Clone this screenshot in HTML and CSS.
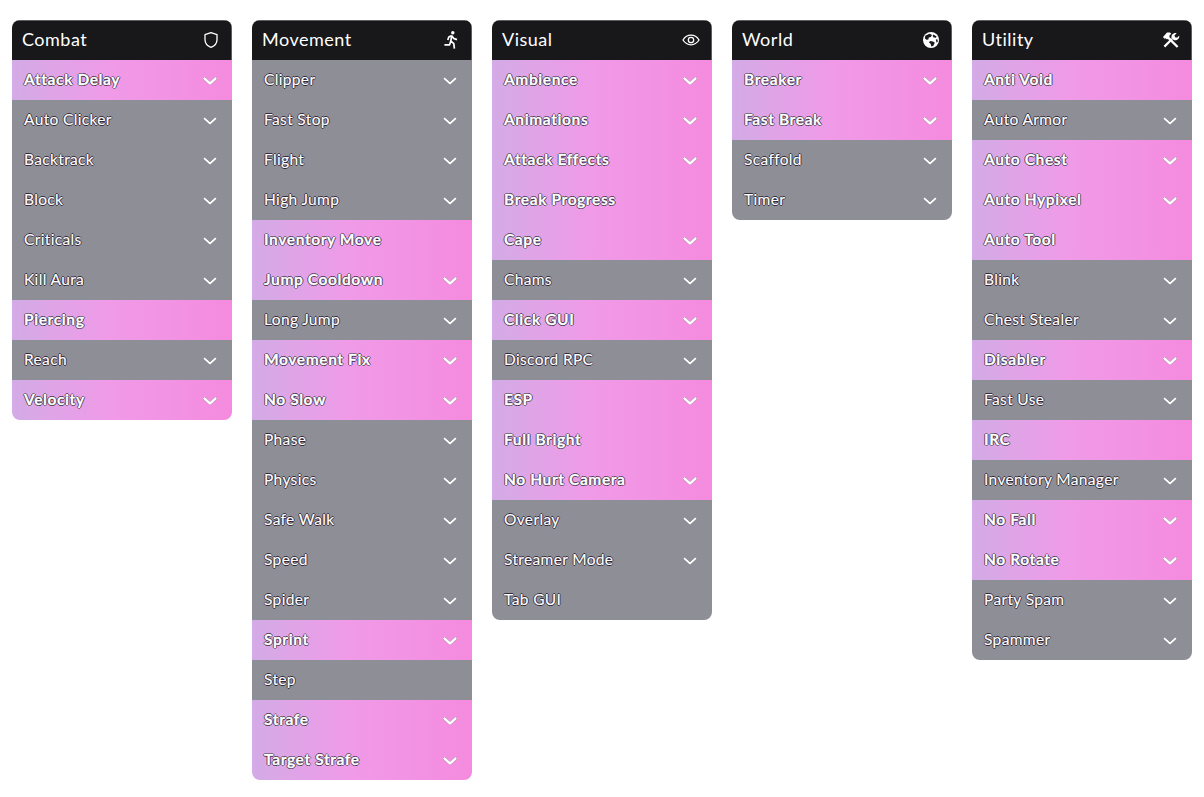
FILE: index.html
```html
<!DOCTYPE html>
<html lang="en">
<head>
<meta charset="utf-8">
<title>Click GUI</title>
<link rel="stylesheet" href="styles.css">
</head>
<body>
<svg class="defs" width="0" height="0" aria-hidden="true">
  <symbol id="chev" viewBox="0 0 14 8"><path d="M1.500 1.500 7 6.500l5.500-5" fill="none" stroke="currentColor" stroke-linecap="round" stroke-linejoin="round"/></symbol>
</svg>
<main class="board" id="board">
  <section class="panel">
    <header class="head"><span>Combat</span>
      <svg class="ico" viewBox="0 0 18 18"><path d="M9 1.600 15 3.600v5.200c0 3.600-2.400 6.200-6 7.600-3.600-1.400-6-4-6-7.600V3.600Z" fill="none" stroke="#fff" stroke-width="1.300" stroke-linejoin="round"/></svg>
    </header>
    <div class="row on"><span>Attack Delay</span><svg class="chev"><use href="#chev"/></svg></div>
    <div class="row"><span>Auto Clicker</span><svg class="chev"><use href="#chev"/></svg></div>
    <div class="row"><span>Backtrack</span><svg class="chev"><use href="#chev"/></svg></div>
    <div class="row"><span>Block</span><svg class="chev"><use href="#chev"/></svg></div>
    <div class="row"><span>Criticals</span><svg class="chev"><use href="#chev"/></svg></div>
    <div class="row"><span>Kill Aura</span><svg class="chev"><use href="#chev"/></svg></div>
    <div class="row on"><span>Piercing</span></div>
    <div class="row"><span>Reach</span><svg class="chev"><use href="#chev"/></svg></div>
    <div class="row on"><span>Velocity</span><svg class="chev"><use href="#chev"/></svg></div>
  </section>
  <section class="panel">
    <header class="head"><span>Movement</span>
      <svg class="ico" viewBox="0 0 18 18"><circle cx="10.800" cy="1.800" r="1.700" fill="#fff"/><path d="M9.800 4.600 6.800 6 5.800 9M9.800 4.600 8.800 10l3 2.600.6 5M9.800 4.600l1.800 2.800 3.400 1.200M8.800 10l-1.200 3.800H2.400" fill="none" stroke="#fff" stroke-width="1.700" stroke-linejoin="round"/></svg>
    </header>
    <div class="row"><span>Clipper</span><svg class="chev"><use href="#chev"/></svg></div>
    <div class="row"><span>Fast Stop</span><svg class="chev"><use href="#chev"/></svg></div>
    <div class="row"><span>Flight</span><svg class="chev"><use href="#chev"/></svg></div>
    <div class="row"><span>High Jump</span><svg class="chev"><use href="#chev"/></svg></div>
    <div class="row on"><span>Inventory Move</span></div>
    <div class="row on"><span>Jump Cooldown</span><svg class="chev"><use href="#chev"/></svg></div>
    <div class="row"><span>Long Jump</span><svg class="chev"><use href="#chev"/></svg></div>
    <div class="row on"><span>Movement Fix</span><svg class="chev"><use href="#chev"/></svg></div>
    <div class="row on"><span>No Slow</span><svg class="chev"><use href="#chev"/></svg></div>
    <div class="row"><span>Phase</span><svg class="chev"><use href="#chev"/></svg></div>
    <div class="row"><span>Physics</span><svg class="chev"><use href="#chev"/></svg></div>
    <div class="row"><span>Safe Walk</span><svg class="chev"><use href="#chev"/></svg></div>
    <div class="row"><span>Speed</span><svg class="chev"><use href="#chev"/></svg></div>
    <div class="row"><span>Spider</span><svg class="chev"><use href="#chev"/></svg></div>
    <div class="row on"><span>Sprint</span><svg class="chev"><use href="#chev"/></svg></div>
    <div class="row"><span>Step</span></div>
    <div class="row on"><span>Strafe</span><svg class="chev"><use href="#chev"/></svg></div>
    <div class="row on"><span>Target Strafe</span><svg class="chev"><use href="#chev"/></svg></div>
  </section>
  <section class="panel">
    <header class="head"><span>Visual</span>
      <svg class="ico" viewBox="0 0 18 18"><path d="M1 9c2-3.200 4.800-4.800 8-4.800s6 1.600 8 4.800c-2 3.200-4.800 4.800-8 4.800S3 12.200 1 9Z" fill="none" stroke="#fff" stroke-width="1.300"/><circle cx="9" cy="9" r="2.700" fill="none" stroke="#fff" stroke-width="1.300"/></svg>
    </header>
    <div class="row on"><span>Ambience</span><svg class="chev"><use href="#chev"/></svg></div>
    <div class="row on"><span>Animations</span><svg class="chev"><use href="#chev"/></svg></div>
    <div class="row on"><span>Attack Effects</span><svg class="chev"><use href="#chev"/></svg></div>
    <div class="row on"><span>Break Progress</span></div>
    <div class="row on"><span>Cape</span><svg class="chev"><use href="#chev"/></svg></div>
    <div class="row"><span>Chams</span><svg class="chev"><use href="#chev"/></svg></div>
    <div class="row on"><span>Click GUI</span><svg class="chev"><use href="#chev"/></svg></div>
    <div class="row"><span>Discord RPC</span><svg class="chev"><use href="#chev"/></svg></div>
    <div class="row on"><span>ESP</span><svg class="chev"><use href="#chev"/></svg></div>
    <div class="row on"><span>Full Bright</span></div>
    <div class="row on"><span>No Hurt Camera</span><svg class="chev"><use href="#chev"/></svg></div>
    <div class="row"><span>Overlay</span><svg class="chev"><use href="#chev"/></svg></div>
    <div class="row"><span>Streamer Mode</span><svg class="chev"><use href="#chev"/></svg></div>
    <div class="row"><span>Tab GUI</span></div>
  </section>
  <section class="panel">
    <header class="head"><span>World</span>
      <svg class="ico" viewBox="0 0 18 18"><circle cx="9" cy="9" r="8" fill="#fff"/><path d="M3.200 4.800 7.600 2.800 10 4 8.800 6 6.800 6.400 6.400 8.400 4.400 8.800 3 7.400ZM11.400 3.400l3.200 2-.6 1.400-2.200-.4-1.200-1.400ZM8 10l3 .4 1.800 1.400-1.400 3-2 .6-.8-2.600L7 11.600ZM13.800 8.400l1.600-.2.400 2.400-1.200 1.200Z" fill="#18181b"/></svg>
    </header>
    <div class="row on"><span>Breaker</span><svg class="chev"><use href="#chev"/></svg></div>
    <div class="row on"><span>Fast Break</span><svg class="chev"><use href="#chev"/></svg></div>
    <div class="row"><span>Scaffold</span><svg class="chev"><use href="#chev"/></svg></div>
    <div class="row"><span>Timer</span><svg class="chev"><use href="#chev"/></svg></div>
  </section>
  <section class="panel">
    <header class="head"><span>Utility</span>
      <svg class="ico" viewBox="0 0 18 18"><path d="M5 5.400 15.600 16" stroke="#fff" stroke-width="2.400" fill="none"/><path d="M1 6 5 1.600 8 1.400 9.400 3 7.600 4 7.400 6 5 8.400 3.600 7.200 2.400 7.800Z" fill="#fff"/><path d="M2.400 15.600 10 8" stroke="#fff" stroke-width="2.200" fill="none"/><path d="M9.600 7.200c-.8-2.800 1.600-5.600 5-5L12.400 4.600l1 1.800 2 .2 1.800-2.200c.6 3.200-2.400 5.600-5.400 4.600Z" fill="#fff"/></svg>
    </header>
    <div class="row on"><span>Anti Void</span></div>
    <div class="row"><span>Auto Armor</span><svg class="chev"><use href="#chev"/></svg></div>
    <div class="row on"><span>Auto Chest</span><svg class="chev"><use href="#chev"/></svg></div>
    <div class="row on"><span>Auto Hypixel</span><svg class="chev"><use href="#chev"/></svg></div>
    <div class="row on"><span>Auto Tool</span></div>
    <div class="row"><span>Blink</span><svg class="chev"><use href="#chev"/></svg></div>
    <div class="row"><span>Chest Stealer</span><svg class="chev"><use href="#chev"/></svg></div>
    <div class="row on"><span>Disabler</span><svg class="chev"><use href="#chev"/></svg></div>
    <div class="row"><span>Fast Use</span><svg class="chev"><use href="#chev"/></svg></div>
    <div class="row on"><span>IRC</span></div>
    <div class="row"><span>Inventory Manager</span><svg class="chev"><use href="#chev"/></svg></div>
    <div class="row on"><span>No Fall</span><svg class="chev"><use href="#chev"/></svg></div>
    <div class="row on"><span>No Rotate</span><svg class="chev"><use href="#chev"/></svg></div>
    <div class="row"><span>Party Spam</span><svg class="chev"><use href="#chev"/></svg></div>
    <div class="row"><span>Spammer</span><svg class="chev"><use href="#chev"/></svg></div>
  </section>
</main>
</body>
</html>
```
FILE: styles.css
```css
html, body {
  margin: 0;
  padding: 0;
  background: #fff;
  overflow: hidden;
}
.defs {
  display: block;
  height: 0;
}
.board {
  display: flex;
  align-items: flex-start;
  gap: 20px;
  padding: 20px 12px 0;
  font-family: "Lato", "Open Sans", sans-serif;
}
.panel {
  width: 220px;
  flex: none;
  border-radius: 8px;
  overflow: hidden;
}
.head {
  height: 40px;
  padding: 0 12px 2px 10px;
  box-sizing: border-box;
  background: #18181b;
  box-shadow: inset -1px 1px 0 rgba(255, 255, 255, .3);
  color: #fff;
  display: flex;
  align-items: center;
  justify-content: space-between;
  font-size: 18px;
  letter-spacing: 0.5px;
}
.ico {
  width: 18px;
  height: 18px;
  display: block;
  position: relative;
  top: 1px;
}
.row {
  height: 40px;
  padding: 0 15px 2px 12px;
  box-sizing: border-box;
  background: #8e8e96;
  color: #fff;
  display: flex;
  align-items: center;
  justify-content: space-between;
  font-size: 15.500px;
  letter-spacing: 0.35px;
  -webkit-text-stroke: .2px #fff;
  text-shadow: -1px 0 .5px rgba(35, 25, 45, .85), 1px 0 .5px rgba(35, 25, 45, .85), 0 -1px .5px rgba(35, 25, 45, .85), 0 1px .5px rgba(35, 25, 45, .85);
}
.row.on {
  background: linear-gradient(90deg, #d3abe6 0%, #f09ae8 45%, #f58bde 100%);
  font-weight: 700;
  letter-spacing: 0.6px;
  -webkit-text-stroke: .3px #fff;
}
.chev {
  width: 14px;
  height: 8px;
  color: #fff;
  display: block;
  position: relative;
  top: 2px;
  stroke-width: 2;
  filter: drop-shadow(0 0 .6px #2a2030);
}
.row.on .chev {
  stroke-width: 2.600;
}
```
